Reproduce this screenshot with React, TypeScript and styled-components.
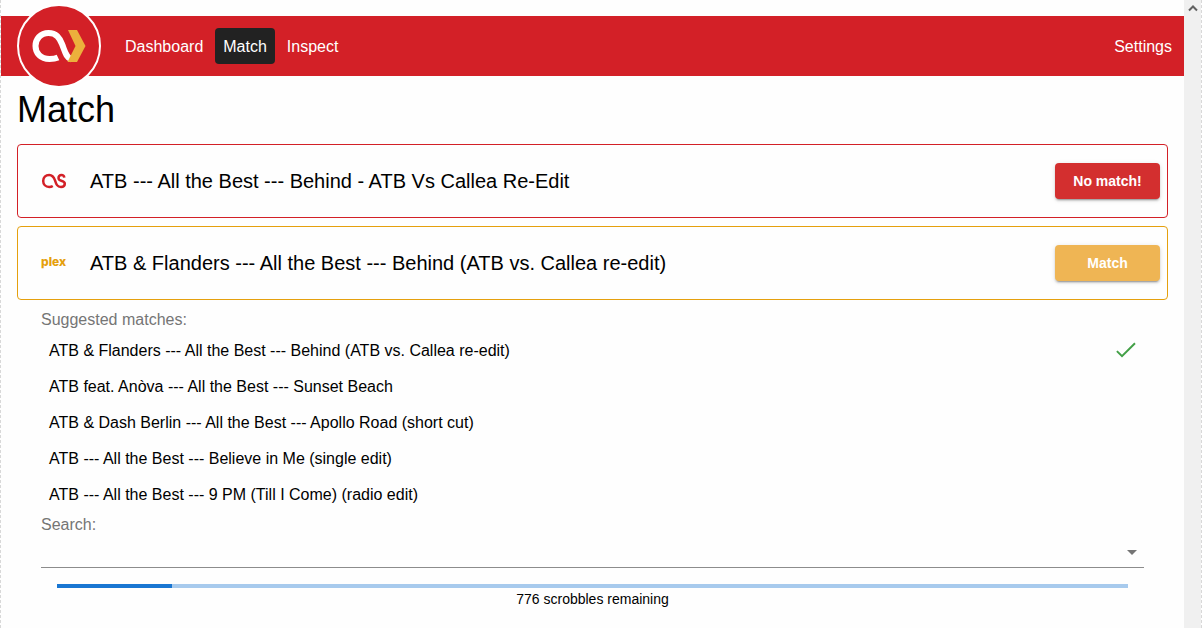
import React from "react";
import styled, { createGlobalStyle } from "styled-components";

const brandRed = "#d32027";
const plexGold = "#e5a00d";

const GlobalStyle = createGlobalStyle`
  * { box-sizing: border-box; }
  body {
    margin: 0;
    background: #fefefe;
    color: #000;
    font-family: "Liberation Sans", Arial, sans-serif;
    font-size: 16px;
    line-height: 24px;
  }
`;

const Frame = styled.div`
  display: flex;
  min-height: 100vh;
  border: 0 dashed #d8d8d8;
  border-width: 0 1px;
`;

const Page = styled.div`
  flex: 1;
  min-width: 0;
  padding-top: 16px;
`;

const ScrollTrack = styled.div`
  width: 17px;
  padding-top: 4px;
  background: #f0f0f0;
  text-align: center;
  line-height: 0;
`;

const Header = styled.header`
  display: flex;
  align-items: center;
  gap: 16px;
  height: 60px;
  padding: 0 4px 0 16px;
  background: ${brandRed};
`;

const LogoLink = styled.a`
  flex: none;
  width: 84px;
  height: 84px;
  border: 2px solid #fff;
  border-radius: 50%;
  background: ${brandRed};
  svg { display: block; }
`;

const Nav = styled.nav`
  display: flex;
  flex: 1;
  gap: 4px;
`;

const NavLink = styled.a<{ $active?: boolean; $end?: boolean }>`
  padding: 7px 8px 5px;
  border-radius: 4px;
  background: ${(p) => (p.$active ? "#222" : "transparent")};
  margin-left: ${(p) => (p.$end ? "auto" : "0")};
  color: #fff;
  text-decoration: none;
`;

const Main = styled.main`
  padding: 12px 16px 16px;
`;

const Title = styled.h1`
  margin: 0 0 12px;
  font-size: 36px;
  font-weight: 400;
  line-height: 44px;
`;

const Card = styled.section<{ $color: string }>`
  display: flex;
  align-items: center;
  gap: 24px;
  min-height: 74px;
  margin-bottom: 8px;
  padding: 8px 7px 8px 24px;
  border: 1px solid ${(p) => p.$color};
  border-radius: 4px;
`;

const Brand = styled.span`
  flex: none;
  width: 24px;
  line-height: 0;
  svg { display: block; overflow: visible; }
`;

const TrackName = styled.h2`
  flex: 1;
  margin: 0;
  font-size: 20px;
  font-weight: 400;
  line-height: 32px;
`;

const ActionButton = styled.button<{ $color: string }>`
  width: 105px;
  height: 36px;
  padding: 0;
  border: 0;
  border-radius: 4px;
  background: ${(p) => p.$color};
  box-shadow: 0 3px 1px -2px rgba(0, 0, 0, 0.2), 0 2px 2px rgba(0, 0, 0, 0.14),
    0 1px 5px rgba(0, 0, 0, 0.12);
  color: #fff;
  font: 700 14px "Liberation Sans", Arial, sans-serif;
`;

const Details = styled.div`
  padding: 0 24px;
`;

const Label = styled.label`
  display: block;
  color: #757575;
`;

const Suggestions = styled.ul`
  margin: 0;
  padding: 1px 0 0;
  list-style: none;
`;

const Suggestion = styled.button`
  display: flex;
  align-items: center;
  justify-content: space-between;
  width: 100%;
  height: 36px;
  padding: 0 6px 0 8px;
  border: 0;
  background: transparent;
  color: #000;
  font: inherit;
  text-align: left;
`;

const SearchField = styled.div`
  display: flex;
  align-items: center;
  height: 31px;
  border-bottom: 1px solid #8c8c8c;
  input {
    flex: 1;
    min-width: 0;
    border: 0;
    outline: 0;
    background: transparent;
    font: inherit;
  }
`;

const OpenButton = styled.button`
  width: 24px;
  height: 24px;
  padding: 0;
  border: 0;
  background: transparent;
  svg { display: block; }
`;

const Progress = styled.div`
  height: 4px;
  margin: 16px 16px 0;
  background: #a7caed;
`;

const ProgressBar = styled.div`
  height: 100%;
  background: #1976d2;
`;

const Remaining = styled.p`
  margin: 0;
  font-size: 14px;
  line-height: 22px;
  text-align: center;
`;

const suggestions = [
  "ATB & Flanders --- All the Best --- Behind (ATB vs. Callea re-edit)",
  "ATB feat. Anòva --- All the Best --- Sunset Beach",
  "ATB & Dash Berlin --- All the Best --- Apollo Road (short cut)",
  "ATB --- All the Best --- Believe in Me (single edit)",
  "ATB --- All the Best --- 9 PM (Till I Come) (radio edit)",
];

const selected = 0;
const progress = 10.7;

function AppLogo() {
  return (
    <svg width="80" height="80" viewBox="0 0 80 80" aria-hidden="true">
      <path
        d="M39 51.500C36.500 52.700 34 53 30.500 53C21.500 53 16.500 47 16.500 40C16.500 33 21.500 27 29.500 27C37.500 27 40.500 32 43 38C46 45.500 47 51.500 52.500 53.500"
        fill="none"
        stroke="#fff"
        strokeWidth="6"
      />
      <path d="M49 24h9l8.500 16-8.500 16H48.500l8-16z" fill="#ecb03c" />
    </svg>
  );
}

function LastFmLogo() {
  return (
    <svg width="24" height="16" viewBox="0 0 24 16" aria-hidden="true">
      <path
        d="M10.800 13C9.700 13.700 8.700 14 7.200 14C3.500 14 1.200 11.300 1.200 8C1.200 4.500 3.600 2 7.200 2C10.800 2 11.900 4.200 13 7.400C14.200 11.200 15.200 14 19 14C21.400 14 22.800 12.600 22.800 10.800C22.800 8.800 21.500 8.300 19.300 7.700C17.500 7.200 16.500 6.500 16.500 4.900C16.500 3.200 17.600 2 19.400 2C21.100 2 22.100 2.900 22.300 4.600"
        fill="none"
        stroke={brandRed}
        strokeWidth="2.5"
      />
    </svg>
  );
}

function PlexLogo() {
  return (
    <svg width="24" height="16" viewBox="0 0 24 16" role="img" aria-label="plex">
      <text
        x="-1"
        y="11"
        fill={plexGold}
        fontFamily="Inter, sans-serif"
        fontSize="12"
        fontWeight="800"
      >
        plex
      </text>
    </svg>
  );
}

export default function App() {
  return (
    <>
      <GlobalStyle />
      <Frame>
        <Page>
          <Header>
            <LogoLink href="#" aria-label="Home">
              <AppLogo />
            </LogoLink>
            <Nav>
              <NavLink href="#dashboard">Dashboard</NavLink>
              <NavLink href="#match" $active>Match</NavLink>
              <NavLink href="#inspect">Inspect</NavLink>
              <NavLink href="#settings" $end>Settings</NavLink>
            </Nav>
          </Header>
          <Main>
            <Title>Match</Title>
            <Card $color={brandRed}>
              <Brand><LastFmLogo /></Brand>
              <TrackName>ATB --- All the Best --- Behind - ATB Vs Callea Re-Edit</TrackName>
              <ActionButton $color="#d32f2f">No match!</ActionButton>
            </Card>
            <Card $color={plexGold}>
              <Brand><PlexLogo /></Brand>
              <TrackName>ATB &amp; Flanders --- All the Best --- Behind (ATB vs. Callea re-edit)</TrackName>
              <ActionButton $color="#efb554">Match</ActionButton>
            </Card>
            <Details>
              <Label as="div" id="suggested">Suggested matches:</Label>
              <Suggestions aria-labelledby="suggested">
                {suggestions.map((name, i) => (
                  <li key={name}>
                    <Suggestion type="button">
                      {name}
                      {i === selected && (
                        <svg width="24" height="24" viewBox="0 0 24 24" fill="#43a047" aria-hidden="true">
                          <path d="M8 18.600 2.200 12.800l1.400-1.400L8 15.800 20.300 3.600l1.400 1.400z" />
                        </svg>
                      )}
                    </Suggestion>
                  </li>
                ))}
              </Suggestions>
              <Label htmlFor="search">Search:</Label>
              <SearchField>
                <input id="search" type="text" />
                <OpenButton type="button" aria-label="Open">
                  <svg width="24" height="24" viewBox="0 0 24 24" fill="#757575">
                    <path d="m7 10 5 5 5-5z" />
                  </svg>
                </OpenButton>
              </SearchField>
              <Progress role="progressbar" aria-label="Matching progress" aria-valuenow={progress}>
                <ProgressBar style={{ width: `${progress}%` }} />
              </Progress>
              <Remaining>776 scrobbles remaining</Remaining>
            </Details>
          </Main>
        </Page>
        <ScrollTrack aria-hidden="true">
          <svg width="10" height="8" viewBox="0 0 10 8" fill="none" stroke="#606060" strokeWidth="2">
            <path d="M1 6.500 5 2.500l4 4" />
          </svg>
        </ScrollTrack>
      </Frame>
    </>
  );
}
